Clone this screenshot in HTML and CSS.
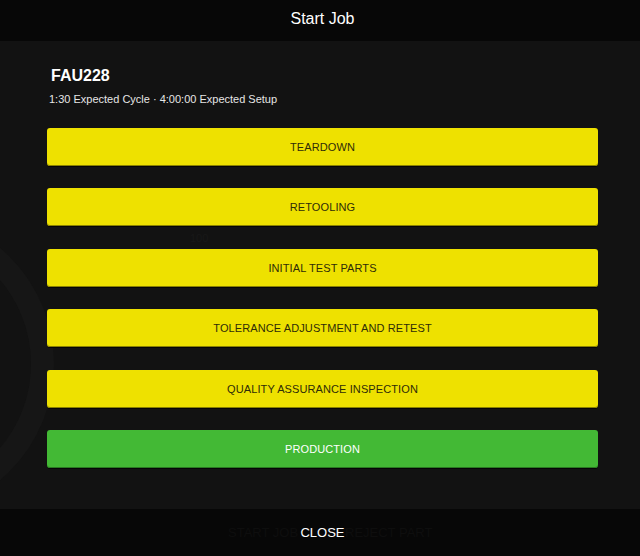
FILE: index.html
```html
<!DOCTYPE html>
<html lang="en">
<head>
<meta charset="utf-8">
<title>Start Job</title>
<link rel="stylesheet" href="styles.css">
</head>
<body>
<div class="screen">
  <div class="backdrop" aria-hidden="true">
    <div class="ring"></div>
    <span class="ghost-num">100</span>
  </div>
  <header class="topbar">
    <h1 class="topbar-title">Start Job</h1>
  </header>
  <main class="content">
    <div class="job-info">
      <h2 class="job-code">FAU228</h2>
      <p class="job-meta">1:30 Expected Cycle · 4:00:00 Expected Setup</p>
    </div>
    <div class="steps">
      <button class="step step-yellow">TEARDOWN</button>
      <button class="step step-yellow">RETOOLING</button>
      <button class="step step-yellow">INITIAL TEST PARTS</button>
      <button class="step step-yellow">TOLERANCE ADJUSTMENT AND RETEST</button>
      <button class="step step-yellow">QUALITY ASSURANCE INSPECTION</button>
      <button class="step step-green">PRODUCTION</button>
    </div>
  </main>
  <footer class="bottombar">
    <span class="ghost-action ghost-start" aria-hidden="true">START JOB</span>
    <span class="ghost-action ghost-reject" aria-hidden="true">REJECT PART</span>
    <button class="close-btn">CLOSE</button>
  </footer>
</div>
</body>
</html>
```

FILE: styles.css
```css
* { box-sizing: border-box; }
html, body {
  margin: 0;
  padding: 0;
  background: #121212;
  font-family: "Liberation Sans", Arial, sans-serif;
}
.screen {
  position: relative;
  width: 640px;
  height: 556px;
  display: flex;
  flex-direction: column;
  background: #121212;
  overflow: hidden;
}
.backdrop {
  position: absolute;
  inset: 0;
  pointer-events: none;
}
.ring {
  position: absolute;
  left: -250px;
  top: 212px;
  width: 304px;
  height: 304px;
  border-radius: 50%;
  border: 23px solid #161616;
}
.ghost-num {
  position: absolute;
  left: 190px;
  top: 232px;
  font-size: 11px;
  color: #181818;
}
.topbar {
  position: relative;
  height: 41px;
  background: #070707;
  display: flex;
  align-items: center;
  justify-content: center;
  padding: 0 0 4px 5px;
}
.topbar-title {
  margin: 0;
  font-size: 16px;
  font-weight: normal;
  color: #ffffff;
}
.content {
  position: relative;
  flex: 1;
  padding: 25px 42px 0 47px;
}
.job-info {
  padding-left: 2px;
}
.job-code {
  margin: 0;
  padding-left: 2px;
  font-size: 16px;
  line-height: 20px;
  font-weight: bold;
  color: #ffffff;
}
.job-meta {
  margin: 6px 0 0;
  font-size: 11px;
  line-height: 14px;
  color: #e6e6e6;
}
.steps {
  margin-top: 22px;
  display: flex;
  flex-direction: column;
  gap: 22.4px;
}
.step {
  height: 38px;
  width: 551px;
  border: none;
  border-radius: 3px;
  font-family: "Liberation Sans", Arial, sans-serif;
  font-size: 11px;
  letter-spacing: 0.1px;
  padding: 0;
  cursor: pointer;
}
.step-yellow {
  background: #eee100;
  color: #2e2c08;
  box-shadow: inset 0 -1px 0 #8a8200, 0 1px 0 #050505;
}
.step-green {
  background: #43b935;
  color: #ffffff;
  box-shadow: inset 0 -1px 0 #2a7a22, 0 1px 0 #050505;
}
.bottombar {
  position: relative;
  height: 47px;
  background: #070707;
  display: flex;
  align-items: center;
  justify-content: center;
  padding-left: 5px;
}
.ghost-action {
  position: absolute;
  top: 16px;
  font-size: 13px;
  color: #0e0e0e;
}
.ghost-start { left: 228px; }
.ghost-reject { left: 345px; }
.close-btn {
  position: relative;
  background: none;
  border: none;
  padding: 0;
  font-family: "Liberation Sans", Arial, sans-serif;
  font-size: 13px;
  color: #ffffff;
}
```
